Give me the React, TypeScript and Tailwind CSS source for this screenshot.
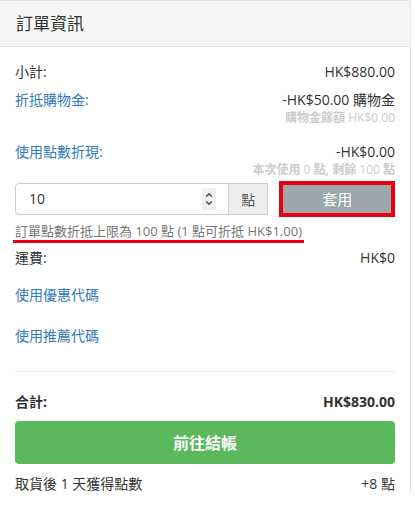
import { ChevronUp, ChevronDown } from 'lucide-react'

const font = { fontFamily: '"Open Sans", "Noto Sans CJK TC", sans-serif' }

function Row({ label, value, link, bold }: { label: string; value: string; link?: boolean; bold?: boolean }) {
  return (
    <div className={`flex justify-between items-center text-[14px] leading-[20px] ${bold ? 'font-bold' : ''}`}>
      <span className={link ? 'text-[#337ab7]' : 'text-[#333]'}>{label}</span>
      <span className="text-[#333]">{value}</span>
    </div>
  )
}

export default function App() {
  return (
    <div className="w-[414px] h-[529px] bg-white" style={font}>
      <div className="w-[411px] border-t border-r border-[#e5e5e5]">
        <div className="h-[46px] bg-[#f5f5f5] border-b border-[#e5e5e5] flex items-center px-4">
          <h3 className="text-[17px] leading-[24px] text-[#333]">訂單資訊</h3>
        </div>

        <div className="px-[15px] pt-[15px]">
          <Row label="小計:" value="HK$880.00" />

          <div className="mt-[8px]">
            <Row label="折抵購物金:" value="-HK$50.00 購物金" link />
            <div className="text-right text-[12px] leading-[16px] text-[#ccc]">
              <span className="font-bold">購物金餘額</span> HK$0.00
            </div>
          </div>

          <div className="mt-[16px]">
            <Row label="使用點數折現:" value="-HK$0.00" link />
            <div className="text-right text-[12px] leading-[16px] text-[#ccc]">
              <span className="font-bold">本次使用</span> 0 <span className="font-bold">點,</span>{' '}
              <span className="font-bold">剩餘</span> 100 <span className="font-bold">點</span>
            </div>
          </div>

          <div className="mt-[3px] flex items-center">
            <div className="flex w-[254px] h-[32px]">
              <div className="flex-1 flex items-center border border-[#ccc] rounded-l-[4px] pl-[13px] pr-[12px]">
                <span className="flex-1 text-[14px] leading-[20px] text-[#333]">10</span>
                <span className="w-[14px] h-[22px] bg-[#f0f0f0] flex flex-col items-center justify-center text-[#444]">
                  <ChevronUp size={10} strokeWidth={3} className="-mb-[2px]" />
                  <ChevronDown size={10} strokeWidth={3} />
                </span>
              </div>
              <div className="w-[39px] flex items-center justify-center bg-[#eee] border border-l-0 border-[#ccc] text-[14px] text-[#555]">
                點
              </div>
            </div>
            <div className="ml-[11px] w-[116px] h-[36px] border-[4px] border-[#e60012]">
              <button className="w-full h-full bg-[#9ca6ab] text-white text-[15px] leading-[20px]">套用</button>
            </div>
          </div>

          <div className="mt-[5px] inline-block -ml-[2px] pl-[2px] pr-[2px] border-b-[3px] border-[#e60012] text-[13px] leading-[18px] text-[#777]">
            訂單點數折抵上限為 100 點 (1 點可折抵 HK$1.00)
          </div>

          <div className="mt-[5px]">
            <Row label="運費:" value="HK$0" />
          </div>

          <div className="mt-[17px] text-[14px] leading-[20px] text-[#337ab7]">使用優惠代碼</div>
          <div className="mt-[21px] text-[14px] leading-[20px] text-[#337ab7]">使用推薦代碼</div>

          <hr className="mt-[25px] border-[#eee]" />

          <div className="mt-[20px]">
            <Row label="合計:" value="HK$830.00" bold />
          </div>

          <button className="mt-[9px] w-full h-[43px] rounded-[4px] bg-[#5cb85c] text-white text-[16px] leading-[22px] font-bold">
            前往結帳
          </button>

          <div className="mt-[10px]">
            <Row label="取貨後 1 天獲得點數" value="+8 點" />
          </div>
        </div>
      </div>
    </div>
  )
}
